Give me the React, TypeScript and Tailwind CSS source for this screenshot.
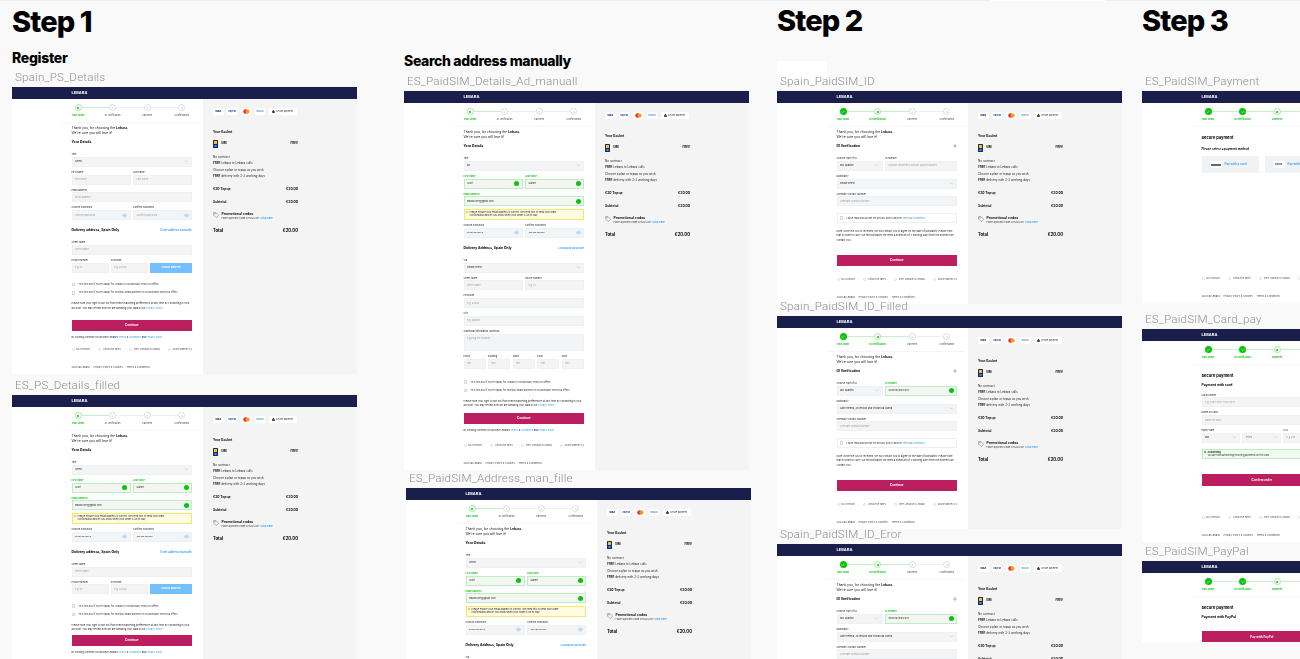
import { ChevronDown, Eye, Tag, Lock, Check, Pencil, Info } from 'lucide-react';
import type { ReactNode } from 'react';

function Step({ state, n, label, lineOn, last }: { state: string; n: number; label: string; lineOn: boolean; last?: boolean }) {
  return (
    <div className="relative flex w-[34.6px] shrink-0 flex-col items-center">
      {!last && (
        <div className={`absolute left-1/2 top-[3px] h-[1px] w-full ${lineOn ? 'bg-[#c6f1c6]' : 'bg-[#efefef]'}`} />
      )}
      {state === 'done' && (
        <div className="relative flex h-[7px] w-[7px] items-center justify-center rounded-full bg-[#0ac20a]">
          <Check size={4} color="#fff" strokeWidth={3} />
        </div>
      )}
      {state === 'current' && (
        <div className="relative flex h-[7px] w-[7px] items-center justify-center rounded-full border border-[#9fe69f] bg-white">
          <div className="h-[2px] w-[2px] rounded-full bg-[#0ac20a]" />
        </div>
      )}
      {state === 'todo' && (
        <div className="relative flex h-[7px] w-[7px] items-center justify-center rounded-full border border-[#dddddd] bg-white text-[2px] leading-none text-[#888]">
          {n}
        </div>
      )}
      <div
        className={`mt-[2.5px] h-[3px] whitespace-nowrap text-[2.4px] leading-[3px] ${
          state === 'todo' ? 'text-[#444]' : 'font-bold text-[#0ac20a]'
        }`}
      >
        {label}
      </div>
    </div>
  );
}

function Stepper({ current }: { current: number }) {
  const names = ['Your Order', 'ID Verification', 'Payment', 'Confirmation'];
  return (
    <div className="-ml-[10.8px] flex h-[24px] w-[138.4px] border-b border-[#f6f6f6] pt-[5.5px]">
      {names.map((name, i) => (
        <Step
          key={name}
          n={i + 1}
          label={name}
          state={i < current ? 'done' : i === current ? 'current' : 'todo'}
          lineOn={i <= current}
          last={i === 3}
        />
      ))}
    </div>
  );
}

function Intro() {
  return (
    <div className="mt-[3.8px] text-[3.3px] leading-[4.4px] text-[#111]">
      <div>
        Thank you, for choosing the <b>Lebara.</b>
      </div>
      <div>We're sure you will love it!</div>
    </div>
  );
}

function Title({ children, right }: { children: ReactNode; right?: ReactNode }) {
  return (
    <div className="flex h-[4.4px] items-center justify-between text-[3.4px] font-bold leading-[4.4px] text-black">
      <span>{children}</span>
      {right}
    </div>
  );
}

function Field({
  label,
  value,
  ph,
  ok,
  eye,
  select,
  h,
  className,
}: {
  label: string;
  value?: string;
  ph?: string;
  ok?: boolean;
  eye?: boolean;
  select?: boolean;
  h?: string;
  className?: string;
}) {
  return (
    <div className={className ?? 'flex-1'}>
      <div className={`mb-[0.8px] h-[3px] whitespace-nowrap text-[2.4px] leading-[3px] ${ok ? 'font-semibold text-[#0ac20a]' : 'text-[#222]'}`}>
        {label}
      </div>
      <div
        className={`flex ${h ?? 'h-[10px] items-center'} justify-between border px-[2.4px] ${
          ok ? 'border-[#bdeebd] bg-[#f4f6f4]' : 'border-[#eef0f2] bg-[#f3f4f6]'
        }`}
      >
        <span className={`whitespace-nowrap text-[2.4px] leading-[3px] ${value ? 'text-[#222]' : 'text-[#98a2ac]'}`}>{value ?? ph}</span>
        {ok && <span className="h-[5px] w-[5px] shrink-0 rounded-full bg-[#0ac20a]" />}
        {eye && <Eye size={5} color="#6db9f2" strokeWidth={2} className="shrink-0" />}
        {select && <ChevronDown size={5} color="#8a929a" strokeWidth={1.5} className="shrink-0" />}
      </div>
    </div>
  );
}

function Warn() {
  return (
    <div className="-mt-[1.7px] flex h-[11.4px] gap-[1.5px] border border-[#f4e76a] bg-[#fffbe2] px-[1.6px] py-[1.2px]">
      <span className="mt-[0.4px] h-[2px] w-[2px] shrink-0 rounded-full bg-[#f0c400]" />
      <span className="w-[100px] text-[2.4px] leading-[3.4px] text-[#222]">
        Please ensure your email address is correct. We need this to send your order confirmation and let you know when your order is on its way.
      </span>
    </div>
  );
}

function Row({ children }: { children: ReactNode }) {
  return <div className="flex gap-[2.5px]">{children}</div>;
}

function Tick({ children }: { children: ReactNode }) {
  return (
    <div className="flex h-[4px] items-center gap-[3.5px] text-[2.4px] leading-[3px] text-[#333]">
      <span className="h-[3.5px] w-[3.5px] shrink-0 border border-[#d8d8d8] bg-white" />
      <span className="whitespace-nowrap">{children}</span>
    </div>
  );
}

function Consent() {
  return (
    <>
      <div className="flex flex-col gap-[4.3px]">
        <Tick>Tick this box if you're happy for Lebara to occasionally send you offers.</Tick>
        <Tick>Tick this box if you're happy for trusted Lebara partners to occasionally send you offers.</Tick>
      </div>
      <div className="mt-[7.6px] text-[2.5px] leading-[4.2px] text-[#222]">
        Please note your right to opt out from these marketing preferences at any time by contacting in your account. You may review how we are handling your data in our{' '}
        <span className="text-[#2b9bf0]">Privacy Policy.</span>
      </div>
    </>
  );
}

function Button({ children, className }: { children: ReactNode; className: string }) {
  return (
    <div className={`flex h-[11px] items-center justify-center bg-[#bb1f5f] text-[3px] font-bold text-white ${className}`}>
      {children}
    </div>
  );
}

function Accept() {
  return (
    <div className="mt-[5px] h-[3px] whitespace-nowrap text-[2.4px] leading-[3px] text-[#222]">
      By clicking Continue you accept Lebara's <span className="text-[#2b9bf0]">Terms</span> &amp; <span className="text-[#2b9bf0]">Conditions</span> and{' '}
      <span className="text-[#2b9bf0]">Privacy Policy.</span>
    </div>
  );
}

function Trust({ className }: { className: string }) {
  return (
    <div className={`flex h-[3.5px] items-center justify-between text-[2.5px] leading-[3px] text-[#555] ${className}`}>
      {['No contract', 'Attractive rates', 'Free Lebara to Lebara', 'Multichannel CS'].map(t => (
        <span key={t} className="flex items-center gap-[1.6px] whitespace-nowrap">
          <span className="h-[3px] w-[3px] rounded-full border border-[#dcdcdc]" />
          {t}
        </span>
      ))}
    </div>
  );
}

function Footer() {
  return (
    <div className="mt-[14.5px] flex h-[3px] gap-[4px] whitespace-nowrap pb-[8px] text-[2.5px] leading-[3px] text-[#444]">
      <span>2020 © Lebara</span>
      <span>Privacy Policy &amp; Cookies</span>
      <span>Terms &amp; Conditions</span>
    </div>
  );
}

function Chip({ children, className }: { children: ReactNode; className: string }) {
  return <div className={`flex h-[7px] items-center justify-center rounded-[1px] bg-white ${className}`}>{children}</div>;
}

function SimIcon() {
  return (
    <svg width="5" height="8" viewBox="0 0 5 8">
      <rect width="5" height="8" rx="0.6" fill="#1a2a6c" />
      <rect x="1" y="1" width="3" height="3" fill="#f5c518" />
      <rect x="1.4" y="5" width="2.2" height="2" fill="#3f8fd8" />
    </svg>
  );
}

function Basket() {
  return (
    <div className="w-[85px] text-[#111]">
      <div className="flex gap-[3.4px] pt-[9.5px]">
        <Chip className="w-[10.5px] text-[2.4px] font-black italic text-[#1a2a80]">VISA</Chip>
        <Chip className="w-[10.5px] text-[2.2px] font-bold italic text-[#123a8a]">PayPal</Chip>
        <Chip className="w-[10.5px]">
          <svg width="7" height="5" viewBox="0 0 7 5">
            <circle cx="2.5" cy="2.5" r="2.2" fill="#e8262a" />
            <circle cx="4.5" cy="2.5" r="2.2" fill="#f59c1a" fillOpacity="0.9" />
          </svg>
        </Chip>
        <Chip className="w-[10.5px] text-[2.2px] font-bold text-[#2f7fc4]">TESCO</Chip>
        <Chip className="w-[28px] gap-[0.8px] text-[2.2px] text-[#222]">
          <Lock size={3} color="#111" fill="#111" />
          Secure payment
        </Chip>
      </div>
      <div className="mt-[14.5px] h-[4px] text-[3.3px] font-bold leading-[4px]">Your Basket</div>
      <div className="mt-[6px] flex h-[8px] items-center justify-between text-[3px] font-bold">
        <span className="flex items-center gap-[3px]">
          <SimIcon />
          SIM
        </span>
        <span>FREE</span>
      </div>
      <div className="mt-[6.3px] text-[3px] leading-[6.4px] text-[#222]">
        <div>No contract</div>
        <div>
          <b>FREE</b> Lebara to Lebara calls
        </div>
        <div>Choose a plan or topup as you wish</div>
        <div>
          <b>FREE</b> delivery with 2-3 working days
        </div>
      </div>
      <div className="mt-[7.6px] flex h-[4px] items-center justify-between text-[3.3px] font-bold leading-[4px]">
        <span>€20 Topup</span>
        <span>€20.00</span>
      </div>
      <div className="mt-[9px] flex h-[4px] items-center justify-between text-[3.3px] font-bold leading-[4px]">
        <span>Subtotal</span>
        <span>€20.00</span>
      </div>
      <div className="mt-[7.5px] flex gap-[2.4px]">
        <Tag size={6} color="#444" strokeWidth={1.5} className="shrink-0" />
        <div>
          <div className="h-[4px] text-[3.5px] font-bold leading-[4px]">Promotional codes</div>
          <div className="mt-[1px] h-[3px] whitespace-nowrap text-[2.6px] leading-[3px] text-[#333]">
            Have a promo code or MJS ID? <span className="font-semibold text-[#2b9bf0]">Click here</span>
          </div>
        </div>
      </div>
      <div className="mt-[8.3px] flex h-[5px] items-center justify-between text-[4.2px] font-bold leading-[5px] text-black">
        <span>Total</span>
        <span>€20.00</span>
      </div>
    </div>
  );
}

function Board({ pos, label, current, children }: { pos: string; label: string; current: number; children: ReactNode }) {
  return (
    <div className={`absolute w-[345px] [will-change:transform] ${pos}`}>
      <div className="h-[16px] pl-[3px] text-[11.6px] font-light leading-[12px] tracking-[0.2px] text-[#8f8f8f] [font-family:Roboto,sans-serif]">{label}</div>
      <div className="flex h-[11.5px] items-center bg-[#191e4a] pl-[59.5px] text-[4px] font-bold text-white">LEBARA</div>
      <div className="flex">
        <div className="w-[191px] shrink-0 bg-white pl-[59.5px] pr-[11px]">
          <Stepper current={current} />
          {children}
        </div>
        <div className="flex-1 bg-[#f4f4f4] pl-[10px]">{current < 2 && <Basket />}</div>
      </div>
    </div>
  );
}

function DetailsTop({ filled, titleValue }: { filled: boolean; titleValue: string }) {
  return (
    <>
      <Intro />
      <div className="mb-[8.6px] mt-[4.9px]">
        <Title>Your Details</Title>
      </div>
      <div className="flex flex-col gap-[4px]">
        <Field label="Title" value={titleValue} select />
        <Row>
          <Field label="First name" ph="First name" value={filled ? 'Scott' : undefined} ok={filled} />
          <Field label="Last name" ph="Last name" value={filled ? 'Gilbert' : undefined} ok={filled} />
        </Row>
        <Field label="Email address" ph="Email address" value={filled ? 'lebara.user@gmail.com' : undefined} ok={filled} />
        {filled && <Warn />}
        <Row>
          <Field label="Choose Password" ph="Choose password" value={filled ? '••••••••••••' : undefined} eye />
          <Field label="Confirm Password" ph="Confirm password" value={filled ? '••••••••••••' : undefined} eye />
        </Row>
      </div>
    </>
  );
}

function Register({ filled }: { filled: boolean }) {
  return (
    <>
      <DetailsTop filled={filled} titleValue="Select" />
      <div className="mt-[7.9px]">
        <Title right={<span className="text-[2.8px] font-semibold text-[#2b9bf0]">Enter address manually</span>}>Delivery address, Spain Only</Title>
      </div>
      <div className="mt-[8.6px] flex flex-col gap-[4px]">
        <Field label="Street name" ph="Street name" />
        <div className="flex items-end gap-[2px]">
          <Field label="House number" ph="e.g. 10" />
          <Field label="Postcode" ph="e.g. 22540" />
          <div className="flex h-[10px] w-[42px] shrink-0 items-center justify-center bg-[#74c0fc] text-[2.6px] font-semibold text-white">Search address</div>
        </div>
      </div>
      <div className="mt-[9.9px]">
        <Consent />
      </div>
      <Button className={filled ? 'mt-[2px]' : 'mt-[8.7px]'}>Continue</Button>
      <Accept />
      <Trust className="mt-[9.2px]" />
      <Footer />
    </>
  );
}

function Manual({ titleValue }: { titleValue: string }) {
  return (
    <>
      <DetailsTop filled titleValue={titleValue} />
      <div className="mt-[7.9px]">
        <Title right={<span className="text-[2.6px] font-semibold text-[#2b9bf0]">Lookup by postcode</span>}>Delivery Address, Spain Only</Title>
      </div>
      <div className="mt-[8.6px] flex flex-col gap-[4px]">
        <Field label="Via" value="Please select" select />
        <Row>
          <Field label="Street name" ph="Street name" />
          <Field label="House number" ph="e.g. 10" />
        </Row>
        <Field label="Postcode" ph="e.g. 22540" />
        <Field label="City" ph="e.g. Madrid" />
        <Field label="Additional information (optional)" ph="e.g Ring the doorbell" h="h-[17px] pt-[2px]" />
        <div className="flex gap-[2.4px]">
          {['Portal', 'Building', 'Stairs', 'Floor', 'Door'].map(t => (
            <Field key={t} label={t} ph="text" />
          ))}
        </div>
      </div>
      <div className="mt-[11.7px]">
        <Consent />
      </div>
      <Button className="mt-[4px] h-[11.6px]">Continue</Button>
      <Accept />
      <Trust className="mt-[12.2px]" />
      <Footer />
    </>
  );
}

function IdForm({ filled }: { filled: boolean }) {
  return (
    <>
      <Intro />
      <div className="mb-[8.6px] mt-[4.9px]">
        <Title right={<Info size={4} color="#fff" fill="#b0b0b0" />}>ID Verification</Title>
      </div>
      <div className="flex flex-col gap-[4px]">
        <Row>
          <Field label="Choose type of ID" value="DNI Spanish" select className="w-[46px] shrink-0" />
          <Field label="ID number" ph="Number and letters without spaces/dashes" value={filled ? '094876385KP287' : undefined} ok={filled} />
        </Row>
        <Field label="Nationality" value={filled ? 'Saint Helena, Ascension and Tristan da Cunha' : 'Please select'} select />
        <Field label="Alternate Contact Number" ph="Alternate Contact Number" />
      </div>
      <div className="mt-[7px] flex h-[9.4px] items-center gap-[3px] border border-[#efefef] px-[2.4px] text-[2.4px] leading-[3px] text-[#333]">
        <span className="h-[3.5px] w-[3.5px] shrink-0 border border-[#d8d8d8]" />
        <span className="whitespace-nowrap">
          I have read and accept the privacy policy and the <span className="text-[#2b9bf0]">Terms</span> &amp; <span className="text-[#2b9bf0]">Conditions</span>
        </span>
      </div>
      <div className="mt-[7.4px] text-[2.5px] leading-[4.2px] text-[#222]">
        Note: Once the SIM is received, we will contact you to agree on the date of portability. Please note that in order to carry out the portability we need a minimum of 3 working days from the moment we contact you.
      </div>
      <Button className="mt-[12.4px] h-[11.6px]">Continue</Button>
      <Trust className="mt-[12px]" />
      <Footer />
    </>
  );
}

function Change() {
  return (
    <span className="flex items-center gap-[0.8px] text-[2.8px] font-semibold text-[#2b9bf0]">
      <Pencil size={3} color="#2b9bf0" />
      Change
    </span>
  );
}

function SecureTitle() {
  return <div className="mt-[8.5px] h-[5px] text-[4px] font-bold leading-[5px] text-black">Secure payment</div>;
}

function PayCard({ children, label }: { children: ReactNode; label: string }) {
  return (
    <div className="flex h-[17px] w-[57.5px] shrink-0 items-center gap-[3px] bg-[#f1f2f4] pl-[8px] text-[3px] font-semibold text-[#2b9bf0]">
      <div className="flex h-[7px] w-[12px] shrink-0 items-center justify-center rounded-[1px] bg-white">{children}</div>
      <span className="whitespace-nowrap">{label}</span>
    </div>
  );
}

function PaySelect() {
  return (
    <>
      <SecureTitle />
      <div className="mt-[7.5px] h-[3px] text-[3px] font-bold leading-[3px] text-black">Please select a payment method</div>
      <div className="mt-[5.5px] flex w-[125px] gap-[5.5px]">
        <PayCard label="Pay with a card">
          <span className="h-[2px] w-[10px] bg-[#666]" />
        </PayCard>
        <PayCard label="Pay with PayPal">
          <span className="text-[2.2px] font-bold italic text-[#123a8a]">PayPal</span>
        </PayCard>
      </div>
      <Trust className="mt-[104px]" />
      <Footer />
    </>
  );
}

function CardPay() {
  return (
    <>
      <SecureTitle />
      <div className="mt-[5px]">
        <Title right={<Change />}>Payment with card</Title>
      </div>
      <div className="mt-[6.2px] flex flex-col gap-[4px]">
        <Field label="Card number" ph="e.g. 0465 8907 7825 0957" />
        <Field label="Name on card" ph="Name on card" />
        <div className="flex gap-[2px]">
          <Field label="Expiry date" value="MM" select />
          <Field label="&nbsp;" value="YYYY" select />
          <Field label="CVV" ph="e.g.246" />
        </div>
      </div>
      <div className="mt-[5.6px] flex h-[10.8px] gap-[1.4px] border border-[#bdeebd] bg-[#effbef] px-[1.6px] py-[1.4px]">
        <span className="mt-[0.4px] h-[2px] w-[2px] shrink-0 rounded-full bg-[#0ac20a]" />
        <div className="text-[2.3px] leading-[3.2px] text-[#222]">
          <div className="font-bold">Authorising</div>
          <div className="whitespace-nowrap">You are now authorising recurring payments on this card</div>
        </div>
      </div>
      <Button className="mt-[14.7px] h-[12px]">Confirm order</Button>
      <Trust className="mt-[29.8px]" />
      <Footer />
    </>
  );
}

function PayPalPay() {
  return (
    <>
      <SecureTitle />
      <div className="mt-[5px]">
        <Title right={<Change />}>Payment with PayPal</Title>
      </div>
      <Button className="mt-[12px] h-[11.5px]">Pay with PayPal</Button>
    </>
  );
}

export default function App() {
  return (
    <div className="relative h-[659px] w-[1300px] overflow-hidden bg-[#f9f9f9] [font-family:Inter,sans-serif]">
      <div className="absolute left-0 top-0 h-[1px] w-full bg-[#eeeeee]" />
      <div className="absolute left-[990px] top-0 h-[1px] w-[115px] bg-white" />
      <div className="absolute left-[777px] top-[61px] h-[20px] w-[50px] bg-white" />

      <div className="absolute left-[12px] top-[3px] text-[29px] font-extrabold leading-[38px] tracking-[-0.9px] text-black">Step 1</div>
      <div className="absolute left-[777px] top-[2px] text-[29px] font-extrabold leading-[38px] tracking-[-0.9px] text-black">Step 2</div>
      <div className="absolute left-[1142px] top-[2px] text-[29px] font-extrabold leading-[38px] tracking-[-0.9px] text-black">Step 3</div>
      <div className="absolute left-[12px] top-[49px] text-[14px] font-extrabold leading-[18px] tracking-[-0.3px] text-black">Register</div>
      <div className="absolute left-[404px] top-[52px] text-[14px] font-extrabold leading-[18px] tracking-[-0.35px] text-black">Search address manually</div>

      <Board pos="left-[12px] top-[71px]" label="Spain_PS_Details" current={0}>
        <Register filled={false} />
      </Board>
      <Board pos="left-[12px] top-[379px]" label="ES_PS_Details_filled" current={0}>
        <Register filled />
      </Board>
      <Board pos="left-[404px] top-[75px]" label="ES_PaidSIM_Details_Ad_manuall" current={0}>
        <Manual titleValue="Mr" />
      </Board>
      <Board pos="left-[405.5px] top-[472px]" label="ES_PaidSIM_Address_man_fille" current={0}>
        <Manual titleValue="Select" />
      </Board>
      <Board pos="left-[777px] top-[75px]" label="Spain_PaidSIM_ID" current={1}>
        <IdForm filled={false} />
      </Board>
      <Board pos="left-[777px] top-[300px]" label="Spain_PaidSIM_ID_Filled" current={1}>
        <IdForm filled />
      </Board>
      <Board pos="left-[777px] top-[528px]" label="Spain_PaidSIM_ID_Eror" current={1}>
        <IdForm filled />
      </Board>
      <Board pos="left-[1141.5px] top-[75px]" label="ES_PaidSIM_Payment" current={2}>
        <PaySelect />
      </Board>
      <Board pos="left-[1141.5px] top-[313px]" label="ES_PaidSIM_Card_pay" current={2}>
        <CardPay />
      </Board>
      <Board pos="left-[1141.5px] top-[545px]" label="ES_PaidSIM_PayPal" current={2}>
        <PayPalPay />
      </Board>
    </div>
  );
}
